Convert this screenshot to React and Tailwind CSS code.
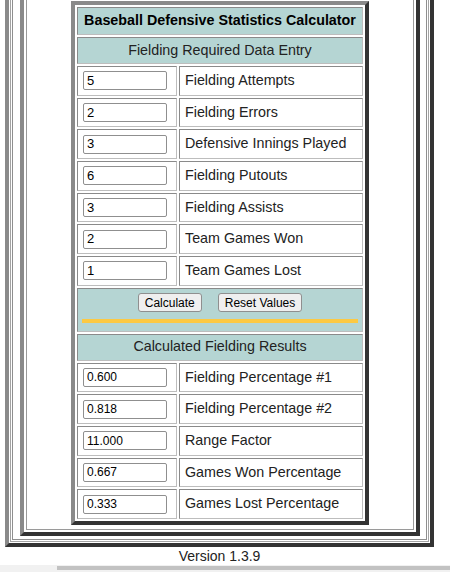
import React from 'react'

const entryRows = [
    { value: "5", label: "Fielding Attempts" },
    { value: "2", label: "Fielding Errors" },
    { value: "3", label: "Defensive Innings Played" },
    { value: "6", label: "Fielding Putouts" },
    { value: "3", label: "Fielding Assists" },
    { value: "2", label: "Team Games Won" },
    { value: "1", label: "Team Games Lost" },
];

const resultRows = [
    { value: "0.600", label: "Fielding Percentage #1" },
    { value: "0.818", label: "Fielding Percentage #2" },
    { value: "11.000", label: "Range Factor" },
    { value: "0.667", label: "Games Won Percentage" },
    { value: "0.333", label: "Games Lost Percentage" },
];

// table cell with the old inset 1px border
function Cell({ className = "", children }) {
    return (
        <div className={`border border-t-[#8a8a8a] border-l-[#8a8a8a] border-r-[#bdbdbd] border-b-[#bdbdbd] ${className}`}>
            {children}
        </div>
    );
}

function DataRow({ value, label, small }) {
    return (
        <div className="grid grid-cols-[100px_1fr] gap-[2px] h-[29.67px]">
            <Cell className="flex items-center px-[5px] bg-white">
                <input
                    type="text"
                    defaultValue={value}
                    className={`w-[84px] h-[19px] border border-[#8f8f8f] rounded-[2px] px-[3px] bg-white text-black outline-none ${small ? "text-[12px]" : "text-[13px]"}`}
                />
            </Cell>
            <Cell className="flex items-center px-[5px] bg-white text-[14.3px] text-[#222]">
                {label}
            </Cell>
        </div>
    );
}

export default function App() {
    return (
        <div className="h-[572px] overflow-hidden bg-white flex flex-col font-['Liberation_Sans',Arial,sans-serif]">
            <div className="ml-[5px] w-[429px] -mt-[20px]">
                {/* outer frame */}
                <div className="border-4 border-t-[#8a8a8a] border-l-[#8a8a8a] border-r-[#333] border-b-[#333] p-[1px]">
                    <div className="border border-[#a3a3a3] p-[1px]">
                        <div className="border border-[#8f8f8f] pl-[7px] pr-[5px] pt-[2px] pb-[3px]">
                            {/* second frame */}
                            <div className="w-[400px] border-4 border-t-[#8a8a8a] border-l-[#8a8a8a] border-r-[#333] border-b-[#333] p-[2px]">
                                <div className="border border-[#9a9a9a] pt-[4px] pb-[4px] flex justify-center">
                                    {/* calculator table */}
                                    <div className="w-[298px] border-4 border-t-[#8a8a8a] border-l-[#8a8a8a] border-r-[#333] border-b-[#333] p-[2px] flex flex-col gap-[2px]">
                                        <Cell className="h-[28px] bg-[#b5d5d3] flex items-center justify-center font-bold text-[14.3px] text-black">
                                            Baseball Defensive Statistics Calculator
                                        </Cell>
                                        <Cell className="h-[27px] bg-[#b5d5d3] flex items-center justify-center text-[14.3px] text-[#222]">
                                            Fielding Required Data Entry
                                        </Cell>
                                        {entryRows.map((row) => (
                                            <DataRow key={row.label} value={row.value} label={row.label} />
                                        ))}
                                        <Cell className="h-[44px] bg-[#b5d5d3] flex flex-col items-center pt-[4px] px-[4px]">
                                            <div className="flex gap-[16px]">
                                                <button className="h-[19px] px-[6px] text-[12px] text-black bg-[#efefef] border border-[#8f8f8f] rounded-[3px]">
                                                    Calculate
                                                </button>
                                                <button className="h-[19px] px-[6px] text-[12px] text-black bg-[#efefef] border border-[#8f8f8f] rounded-[3px]">
                                                    Reset Values
                                                </button>
                                            </div>
                                            <div className="mt-[7px] w-full h-[4px] bg-[#fcc943]"></div>
                                        </Cell>
                                        <Cell className="h-[27px] bg-[#b5d5d3] flex items-center justify-center text-[14.3px] text-[#222]">
                                            Calculated Fielding Results
                                        </Cell>
                                        {resultRows.map((row) => (
                                            <DataRow key={row.label} value={row.value} label={row.label} small />
                                        ))}
                                    </div>
                                </div>
                            </div>
                        </div>
                    </div>
                </div>
                <div className="text-center text-[14px] leading-[18px] text-[#222]">Version 1.3.9</div>
            </div>
            {/* horizontal scrollbar */}
            <div className="mt-auto h-[7px] bg-[#f1f1f1] pt-[1px]">
                <div className="ml-[57px] h-[4px] bg-[#c2c2c2]"></div>
            </div>
        </div>
    )
}
